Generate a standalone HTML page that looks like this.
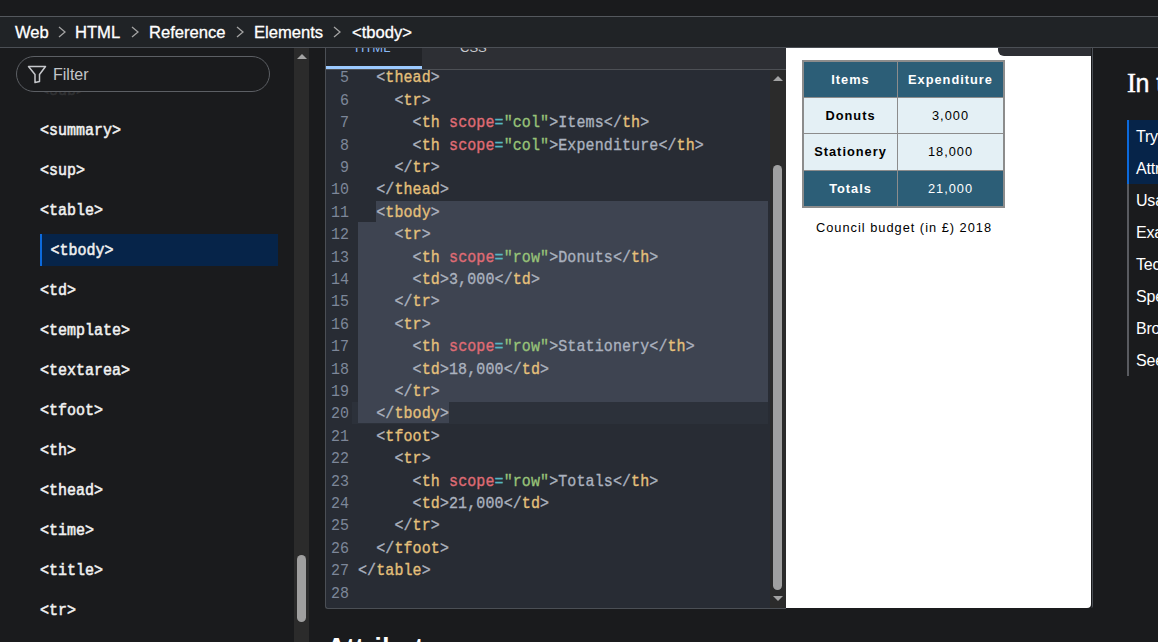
<!DOCTYPE html>
<html><head><meta charset="utf-8">
<style>
*{margin:0;padding:0;box-sizing:border-box}
html,body{width:1158px;height:642px;overflow:hidden;background:#1a1b1d;font-family:"Liberation Sans",sans-serif;color:#fff}
.abs{position:absolute}
/* breadcrumb */
#bc{position:absolute;left:0;top:16px;width:1158px;height:32px;background:#202326;border-top:1px solid #54585d;border-bottom:1px solid #4b4f55;z-index:10}
#bc span{position:absolute;top:7px;font-size:16.6px;line-height:18px;color:#fff;white-space:nowrap;-webkit-text-stroke:0.3px #fff}
#bc svg{position:absolute;top:9px}
/* sidebar */
#filter{left:16px;top:56px;width:254px;height:36px;border:1px solid #5c5f64;border-radius:18px;background:#1a1b1d}
#filter span{position:absolute;left:36px;top:9px;font-size:16px;line-height:18px;color:#c3c5c9}
.si{position:absolute;left:40px;margin-top:1.7px;transform:scaleY(1.1);transform-origin:0 7.75px;font-family:"Liberation Mono",monospace;font-size:15px;line-height:18px;color:#f0f0f0;font-weight:normal;-webkit-text-stroke:0.5px currentColor;white-space:pre}
#sbtrack{left:294px;top:48px;width:15px;height:594px;background:#2b2b2b}
/* editor */
#editor{left:325px;top:40px;width:461px;height:569px;background:#282c34;border-left:1px solid #4b4f55;border-bottom:1px solid #4b4f55;border-bottom-left-radius:3px;overflow:hidden}
#tabs{left:0;top:0;width:460px;height:30px;background:#2d2f34;border-bottom:1px solid #4d5055}
#tab1{left:0;top:0;width:96px;height:29px;background:#212327}
#tab1u{left:0;top:26px;width:96px;height:3px;background:#9ccaff}
.ln{position:absolute;left:0;width:23px;text-align:right;font-family:"Liberation Mono",monospace;font-size:15px;line-height:22.4px;color:#7d8799;white-space:pre;transform:scaleY(1.1);transform-origin:0 50%}
.cl{position:absolute;left:32px;font-family:"Liberation Mono",monospace;font-size:15px;line-height:22.4px;color:#abb2bf;white-space:pre;transform:scaleY(1.1);transform-origin:0 50%;letter-spacing:0.1px;-webkit-text-stroke:0.3px currentColor}
.t{color:#e5c07b}.a{color:#e06c75}.e{color:#56b6c2}.s{color:#98c379}
.sel{position:absolute;background:#3e4451}
#csb{left:444px;top:30px;width:16px;height:538px;background:#2b2b2b}
/* output */
#out{left:786px;top:48px;width:305px;height:560px;background:#fff;border-bottom-right-radius:4px}
#rtab{left:998px;top:48px;width:93px;height:7.5px;background:#2d2f34;border-bottom-left-radius:6px}
#vline{left:1091px;top:40px;width:2px;height:568px;border-right:1px solid #4b4f55;border-bottom-right-radius:4px}
.tc{position:absolute;font-family:"Liberation Sans",sans-serif;font-size:12.8px;letter-spacing:1px;line-height:15px;text-align:center;white-space:nowrap}
/* toc */
#toch{left:1127px;top:69px;font-size:25px;font-weight:normal;-webkit-text-stroke:0.4px #fff;line-height:28px;white-space:nowrap}
.toc{position:absolute;left:1136px;margin-top:1px;letter-spacing:-0.2px;font-size:16px;line-height:18px;color:#fff;white-space:nowrap}
</style></head><body>

<!-- breadcrumb -->
<div id="bc">
 <span style="left:15px">Web</span>
 <svg style="left:58px" width="8" height="12" viewBox="0 0 8 12"><polyline points="1,1 7,6 1,11" fill="none" stroke="#a3a3a3" stroke-width="1.3"/></svg>
 <span style="left:75px">HTML</span>
 <svg style="left:131px" width="8" height="12" viewBox="0 0 8 12"><polyline points="1,1 7,6 1,11" fill="none" stroke="#a3a3a3" stroke-width="1.3"/></svg>
 <span style="left:149px">Reference</span>
 <svg style="left:236px" width="8" height="12" viewBox="0 0 8 12"><polyline points="1,1 7,6 1,11" fill="none" stroke="#a3a3a3" stroke-width="1.3"/></svg>
 <span style="left:254px">Elements</span>
 <svg style="left:333px" width="8" height="12" viewBox="0 0 8 12"><polyline points="1,1 7,6 1,11" fill="none" stroke="#a3a3a3" stroke-width="1.3"/></svg>
 <span style="left:352px">&lt;tbody&gt;</span>
</div>

<!-- sidebar -->
<div class="abs" style="left:0;top:92px;width:290px;height:6px;overflow:hidden"><div class="si" style="top:-11px;color:#2f3032">&lt;sub&gt;</div></div>
<div class="si" style="top:121px">&lt;summary&gt;</div>
<div class="si" style="top:161px">&lt;sup&gt;</div>
<div class="si" style="top:201px">&lt;table&gt;</div>
<div class="abs" style="left:40px;top:234px;width:238px;height:32px;background:#062449;border-left:2px solid #0c6adc"></div>
<div class="si" style="top:241px;left:50.5px">&lt;tbody&gt;</div>
<div class="si" style="top:281px">&lt;td&gt;</div>
<div class="si" style="top:321px">&lt;template&gt;</div>
<div class="si" style="top:361px">&lt;textarea&gt;</div>
<div class="si" style="top:401px">&lt;tfoot&gt;</div>
<div class="si" style="top:441px">&lt;th&gt;</div>
<div class="si" style="top:481px">&lt;thead&gt;</div>
<div class="si" style="top:521px">&lt;time&gt;</div>
<div class="si" style="top:561px">&lt;title&gt;</div>
<div class="si" style="top:601px">&lt;tr&gt;</div>

<div id="filter" class="abs">
 <svg class="abs" style="left:10px;top:8px" width="20" height="19" viewBox="0 0 20 19"><path d="M1.5 1.5 H18.5 L12.5 9.5 V16.5 L8 17.5 V9.5 Z" fill="none" stroke="#c6c8cc" stroke-width="1.5" stroke-linejoin="round"/></svg>
 <span>Filter</span>
</div>

<div id="sbtrack" class="abs">
 <svg class="abs" style="left:2.5px;top:6px" width="10" height="5" viewBox="0 0 10 5"><path d="M0 5 L5 0 L10 5 Z" fill="#a3a3a3"/></svg>
 <div class="abs" style="left:3px;top:507px;width:9px;height:67px;border-radius:5px;background:#9f9f9f"></div>
</div>

<!-- editor -->
<div id="editor" class="abs">
 <div id="tabs" class="abs">
  <div id="tab1" class="abs"></div>
  <div id="tab1u" class="abs"></div>
  <div class="abs" style="left:29px;top:0px;font-size:13px;line-height:15px;color:#8ab8f5">HTML</div>
  <div class="abs" style="left:134px;top:0px;font-size:13px;line-height:15px;color:#c9cbcf">CSS</div>
 </div>
 <div id="code" class="abs" style="left:0;top:30px;width:445px;height:538px;overflow:hidden">
  <div class="sel" style="left:26px;top:332px;width:416px;height:22px;background:#2c313a"></div>
  <div class="sel" style="left:50px;top:131px;width:392px;height:21px"></div>
  <div class="sel" style="left:32px;top:152px;width:410px;height:180px"></div>
  <div class="sel" style="left:32px;top:332px;width:91px;height:21px"></div>
  <div class="ln" style="top:-1.6px">5</div><div class="cl" style="top:-1.6px">  &lt;<span class="t">thead</span>&gt;</div>
  <div class="ln" style="top:20.8px">6</div><div class="cl" style="top:20.8px">    &lt;<span class="t">tr</span>&gt;</div>
  <div class="ln" style="top:43.2px">7</div><div class="cl" style="top:43.2px">      &lt;<span class="t">th</span> <span class="a">scope</span><span class="e">=</span><span class="s">"col"</span>&gt;Items&lt;/<span class="t">th</span>&gt;</div>
  <div class="ln" style="top:65.6px">8</div><div class="cl" style="top:65.6px">      &lt;<span class="t">th</span> <span class="a">scope</span><span class="e">=</span><span class="s">"col"</span>&gt;Expenditure&lt;/<span class="t">th</span>&gt;</div>
  <div class="ln" style="top:88.0px">9</div><div class="cl" style="top:88.0px">    &lt;/<span class="t">tr</span>&gt;</div>
  <div class="ln" style="top:110.4px">10</div><div class="cl" style="top:110.4px">  &lt;/<span class="t">thead</span>&gt;</div>
  <div class="ln" style="top:132.8px">11</div><div class="cl" style="top:132.8px">  &lt;<span class="t">tbody</span>&gt;</div>
  <div class="ln" style="top:155.2px">12</div><div class="cl" style="top:155.2px">    &lt;<span class="t">tr</span>&gt;</div>
  <div class="ln" style="top:177.6px">13</div><div class="cl" style="top:177.6px">      &lt;<span class="t">th</span> <span class="a">scope</span><span class="e">=</span><span class="s">"row"</span>&gt;Donuts&lt;/<span class="t">th</span>&gt;</div>
  <div class="ln" style="top:200.0px">14</div><div class="cl" style="top:200.0px">      &lt;<span class="t">td</span>&gt;3,000&lt;/<span class="t">td</span>&gt;</div>
  <div class="ln" style="top:222.4px">15</div><div class="cl" style="top:222.4px">    &lt;/<span class="t">tr</span>&gt;</div>
  <div class="ln" style="top:244.8px">16</div><div class="cl" style="top:244.8px">    &lt;<span class="t">tr</span>&gt;</div>
  <div class="ln" style="top:267.2px">17</div><div class="cl" style="top:267.2px">      &lt;<span class="t">th</span> <span class="a">scope</span><span class="e">=</span><span class="s">"row"</span>&gt;Stationery&lt;/<span class="t">th</span>&gt;</div>
  <div class="ln" style="top:289.6px">18</div><div class="cl" style="top:289.6px">      &lt;<span class="t">td</span>&gt;18,000&lt;/<span class="t">td</span>&gt;</div>
  <div class="ln" style="top:312.0px">19</div><div class="cl" style="top:312.0px">    &lt;/<span class="t">tr</span>&gt;</div>
  <div class="ln" style="top:334.4px">20</div><div class="cl" style="top:334.4px">  &lt;/<span class="t">tbody</span>&gt;</div>
  <div class="ln" style="top:356.8px">21</div><div class="cl" style="top:356.8px">  &lt;<span class="t">tfoot</span>&gt;</div>
  <div class="ln" style="top:379.2px">22</div><div class="cl" style="top:379.2px">    &lt;<span class="t">tr</span>&gt;</div>
  <div class="ln" style="top:401.6px">23</div><div class="cl" style="top:401.6px">      &lt;<span class="t">th</span> <span class="a">scope</span><span class="e">=</span><span class="s">"row"</span>&gt;Totals&lt;/<span class="t">th</span>&gt;</div>
  <div class="ln" style="top:424.0px">24</div><div class="cl" style="top:424.0px">      &lt;<span class="t">td</span>&gt;21,000&lt;/<span class="t">td</span>&gt;</div>
  <div class="ln" style="top:446.4px">25</div><div class="cl" style="top:446.4px">    &lt;/<span class="t">tr</span>&gt;</div>
  <div class="ln" style="top:468.8px">26</div><div class="cl" style="top:468.8px">  &lt;/<span class="t">tfoot</span>&gt;</div>
  <div class="ln" style="top:491.2px">27</div><div class="cl" style="top:491.2px">&lt;/<span class="t">table</span>&gt;</div>
  <div class="ln" style="top:513.6px">28</div><div class="cl" style="top:513.6px"></div>
 </div>
 <div id="csb" class="abs">
  <svg class="abs" style="left:2.5px;top:6px" width="10" height="5" viewBox="0 0 10 5"><path d="M0 5 L5 0 L10 5 Z" fill="#a3a3a3"/></svg>
  <div class="abs" style="left:3px;top:95px;width:9px;height:425px;border-radius:5px;background:#a0a0a0"></div>
  <svg class="abs" style="left:2.5px;top:526px" width="10" height="5" viewBox="0 0 10 5"><path d="M0 0 L5 5 L10 0 Z" fill="#a3a3a3"/></svg>
 </div>
</div>

<!-- output -->
<div id="out" class="abs"></div>
<div class="abs" style="left:802px;top:60px;width:203px;height:148px;background:#8c8c8c"></div>
<div class="abs" style="left:804px;top:62px;width:93px;height:35px;background:#2c5e77"></div>
<div class="abs" style="left:898px;top:62px;width:105px;height:35px;background:#2c5e77"></div>
<div class="abs" style="left:804px;top:98px;width:93px;height:35px;background:#e4f0f5"></div>
<div class="abs" style="left:898px;top:98px;width:105px;height:35px;background:#e4f0f5"></div>
<div class="abs" style="left:804px;top:134px;width:93px;height:36px;background:#e4f0f5"></div>
<div class="abs" style="left:898px;top:134px;width:105px;height:36px;background:#e4f0f5"></div>
<div class="abs" style="left:804px;top:171px;width:93px;height:35px;background:#2c5e77"></div>
<div class="abs" style="left:898px;top:171px;width:105px;height:35px;background:#2c5e77"></div>
<div class="tc" style="left:804px;top:72px;width:93px;color:#fff;font-weight:bold">Items</div>
<div class="tc" style="left:898px;top:72px;width:105px;color:#fff;font-weight:bold">Expenditure</div>
<div class="tc" style="left:804px;top:108px;width:93px;color:#000;font-weight:bold">Donuts</div>
<div class="tc" style="left:898px;top:108px;width:105px;color:#000">3,000</div>
<div class="tc" style="left:804px;top:143.5px;width:93px;color:#000;font-weight:bold">Stationery</div>
<div class="tc" style="left:898px;top:143.5px;width:105px;color:#000">18,000</div>
<div class="tc" style="left:804px;top:180.6px;width:93px;color:#fff;font-weight:bold">Totals</div>
<div class="tc" style="left:898px;top:180.6px;width:105px;color:#fff">21,000</div>
<div class="tc" style="left:786px;top:219.6px;width:236px;color:#000">Council budget (in £) 2018</div>
<div id="rtab" class="abs"></div>
<div id="vline" class="abs"></div>

<!-- toc -->
<div id="toch" class="abs"><span style="font-family:'Liberation Serif',serif;font-size:27px;margin-right:-0.5px">I</span>n this article</div>
<div class="abs" style="left:1127px;top:120px;width:2px;height:256px;background:#595b60"></div>
<div class="abs" style="left:1127px;top:120px;width:31px;height:64px;background:#062449;border-left:2px solid #0c6adc"></div>
<div class="toc" style="top:127px">Try it</div>
<div class="toc" style="top:159px">Attributes</div>
<div class="toc" style="top:191px">Usage notes</div>
<div class="toc" style="top:223px">Examples</div>
<div class="toc" style="top:255px">Technical summary</div>
<div class="toc" style="top:287px">Specifications</div>
<div class="toc" style="top:319px">Browser compatibility</div>
<div class="toc" style="top:351px">See also</div>

<!-- attributes heading -->
<div class="abs" style="left:327px;top:633px;font-size:26px;letter-spacing:0.35px;font-weight:bold;line-height:28px;white-space:nowrap">Attributes</div>

</body></html>
